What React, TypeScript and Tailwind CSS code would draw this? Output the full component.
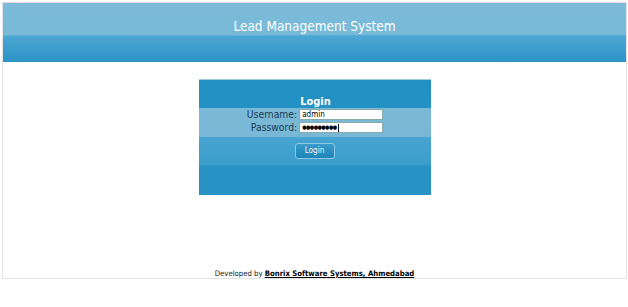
import React from "react";

export default function App() {
  return (
    <div className="w-[628px] h-[307px] bg-white pt-[2px] pl-[2px] pr-[1px] font-['DejaVu_Sans_Condensed','DejaVu_Sans',Verdana,sans-serif]">
      <div className="h-[277px] border border-[#e4e4e4] border-t-[#f0d8dc] flex flex-col">
        <div className="relative h-[59px] bg-[linear-gradient(to_bottom,#7cbcda_0px,#78b9d8_32px,#4ba7d1_33px,#3c9ecd_45px,#2b93c5_59px)] flex items-center justify-center">
          <svg className="absolute left-0 top-[28px] w-full h-[8px]" viewBox="0 0 620 8" preserveAspectRatio="none">
            <path d="M0 5 C 150 8, 300 2, 620 4 L620 8 L0 8 Z" fill="#4ba7d1" opacity="0.5" />
          </svg>
          <span className="relative text-white text-[13.5px] leading-none -mt-[11px]">Lead Management System</span>
        </div>
        <div className="flex-1 flex flex-col items-center pt-[17px]">
          <div className="w-[232px] h-[116px] border-t border-[#9ccbe2] bg-[linear-gradient(to_bottom,#2190c3_0px,#2391c4_28px,#7ab9d6_28px,#78b8d6_57px,#48a4d0_57px,#3b9dcb_85px,#2892c4_85px,#2892c4_116px)] flex flex-col items-center pt-[16px]">
            <div className="text-white font-bold text-[11px] leading-[12px] ml-[2px]">Login</div>
            <div className="grid grid-cols-[auto_auto] gap-x-[2px] gap-y-[2px] items-center mt-[1px] ml-[1px]">
              <span className="text-right text-[10.3px] leading-[11px] text-[#1b3a52]">Username:</span>
              <div className="w-[84px] h-[11px] bg-white border border-[#8aa] flex items-center pl-[2px] text-[8px] text-black">admin</div>
              <span className="text-right text-[10.3px] leading-[11px] text-[#1b3a52]">Password:</span>
              <div className="w-[84px] h-[11px] bg-white border border-[#8aa] flex items-center pl-[2px] text-[5.5px] text-black tracking-[-0.5px] leading-none">
                ●●●●●●●●●<span className="inline-block w-px h-[8px] bg-black ml-[1px]"></span>
              </div>
            </div>
            <div className="mt-[10px] w-[40px] h-[16px] rounded-[3px] border border-[#8cc8e4] bg-[linear-gradient(to_bottom,#3a9ccb,#2a8fc0_50%,#1f86b8)] flex items-center justify-center text-[8px] text-[#e6f3fa]">
              Login
            </div>
          </div>
          <div className="flex-1" />
          <div className="text-[7.7px] leading-[9px] text-[#222] mb-[0px]">
            Developed by <span className="font-bold underline text-black">Bonrix Software Systems, Ahmedabad</span>
          </div>
        </div>
      </div>
    </div>
  );
}
